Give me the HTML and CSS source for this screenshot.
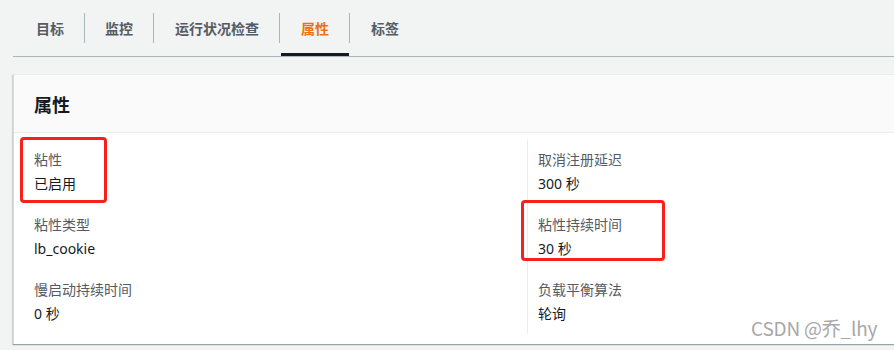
FILE: index.html
```html
<!DOCTYPE html>
<html lang="zh">
<head>
<meta charset="utf-8">
<link rel="stylesheet" href="styles.css">
</head>
<body>
<div class="page">
  <nav class="tabs">
    <div class="tab">目标</div>
    <div class="tab">监控</div>
    <div class="tab">运行状况检查</div>
    <div class="tab active">属性</div>
    <div class="tab">标签</div>
  </nav>
  <section class="card">
    <header class="card-header"><h2>属性</h2></header>
    <div class="card-body">
      <div class="col">
        <div class="item"><div class="label">粘性</div><div class="value">已启用</div></div>
        <div class="item"><div class="label">粘性类型</div><div class="value">lb_cookie</div></div>
        <div class="item"><div class="label">慢启动持续时间</div><div class="value">0 秒</div></div>
      </div>
      <div class="col col-right">
        <div class="item"><div class="label">取消注册延迟</div><div class="value">300 秒</div></div>
        <div class="item"><div class="label">粘性持续时间</div><div class="value">30 秒</div></div>
        <div class="item"><div class="label">负载平衡算法</div><div class="value">轮询</div></div>
      </div>
    </div>
  </section>
  <div class="mark mark-1"></div>
  <div class="mark mark-2"></div>
  <div class="watermark">CSDN @乔_lhy</div>
</div>
</body>
</html>
```
FILE: styles.css
```css
* { box-sizing: border-box; }
html, body {
  margin: 0;
  padding: 0;
  background: #f2f3f3;
  overflow: hidden;
}
body {
  font-family: "Noto Sans", "Noto Sans CJK SC", sans-serif;
  font-size: 14px;
  color: #16191f;
  width: 894px;
  height: 350px;
}
.page {
  position: relative;
  width: 894px;
  height: 350px;
  overflow: hidden;
}
.tabs {
  display: flex;
  margin-left: 13px;
  padding-left: 2px;
  padding-top: 13px;
  border-bottom: 1px solid #aab7b8;
  height: 57px;
}
.tab {
  position: relative;
  height: 43px;
  line-height: 30px;
  padding: 0 20px 0 21px;
  font-weight: 700;
  color: #545b64;
  font-family: "Noto Sans CJK SC", sans-serif;
}
.tab:nth-child(n+3) { padding-left: 22px; }
.tab + .tab::before {
  content: "";
  position: absolute;
  left: 0;
  top: 0;
  width: 1px;
  height: 30px;
  background: #aab7b8;
}
.tab.active { color: #ec7211; }
.tab.active::after {
  content: "";
  position: absolute;
  left: 2px;
  right: 0;
  bottom: 0;
  height: 3px;
  background: #16191f;
}
.card {
  margin-top: 17px;
  margin-left: 13px;
  width: 1000px;
  height: 270px;
  background: #fff;
  border-top: 1px solid #eaeded;
  border-left: 1px solid #d5dbdb;
  box-shadow: 0 1px 1px 0 rgba(0, 28, 36, 0.3), -1px 1px 1px 0 rgba(0, 28, 36, 0.1);
}
.card-header {
  height: 58px;
  background: #fafafa;
  border-bottom: 1px solid #eaeded;
  display: flex;
  align-items: center;
  padding-left: 20px;
}
.card-header h2 {
  margin: 0;
  font-size: 18px;
  font-weight: 700;
  line-height: 22px;
  color: #16191f;
  font-family: "Noto Sans CJK SC", sans-serif;
}
.card-body {
  display: grid;
  grid-template-columns: 493px 1fr;
  padding: 6px 20px 10px 20px;
}
.col {
  display: flex;
  flex-direction: column;
  gap: 18px;
  padding: 9px 0;
}
.col-right {
  border-left: 1px solid #eaeded;
  padding-left: 10px;
}
.item {
  display: flex;
  flex-direction: column;
  gap: 3px;
}
.label {
  line-height: 22px;
  color: #545b64;
  font-family: "Noto Sans CJK SC", sans-serif;
}
.value {
  line-height: 22px;
  color: #16191f;
}
.mark {
  position: absolute;
  border: 3px solid #f5211a;
  border-radius: 4px;
}
.mark-1 { left: 20px; top: 137px; width: 87px; height: 66px; }
.mark-2 { left: 521px; top: 200px; width: 144px; height: 61px; }
.watermark {
  position: absolute;
  left: 751px;
  top: 315px;
  font-size: 19px;
  line-height: 26px;
  color: #a8a8a8;
  font-family: "Noto Sans CJK SC", sans-serif;
  letter-spacing: -0.2px;
  text-shadow: 0 0 1px #fff;
}
```
